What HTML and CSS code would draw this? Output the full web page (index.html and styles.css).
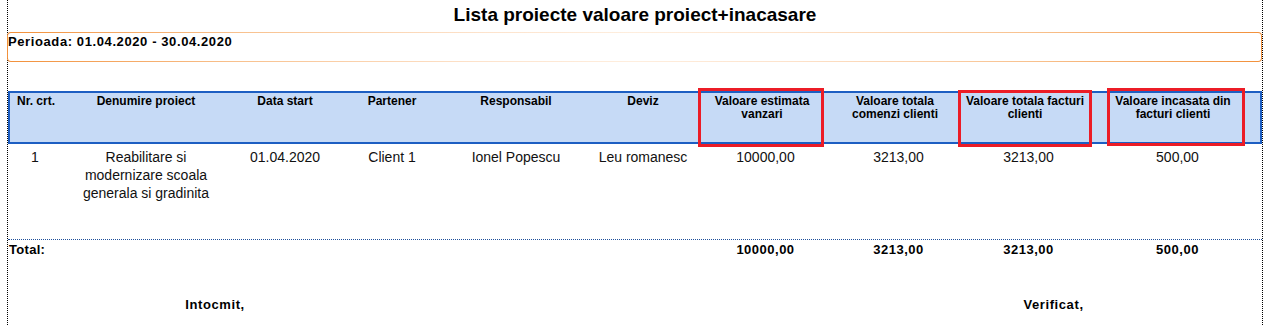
FILE: index.html
```html
<!DOCTYPE html>
<html lang="ro">
<head>
<meta charset="utf-8">
<title>Lista proiecte valoare proiect+inacasare</title>
<link rel="stylesheet" href="styles.css">
</head>
<body>
<div class="page">
  <h1 class="title">Lista proiecte valoare proiect+inacasare</h1>
  <div class="period"><div class="period-inner">Perioada: 01.04.2020 - 30.04.2020</div></div>

  <div class="report">
    <div class="row head">
      <div class="cell">Nr. crt.</div>
      <div class="cell">Denumire proiect</div>
      <div class="cell">Data start</div>
      <div class="cell">Partener</div>
      <div class="cell">Responsabil</div>
      <div class="cell">Deviz</div>
      <div class="cell">Valoare estimata<br>vanzari</div>
      <div class="cell">Valoare totala<br>comenzi clienti</div>
      <div class="cell">Valoare totala facturi<br>clienti</div>
      <div class="cell">Valoare incasata din<br>facturi clienti</div>
    </div>
    <div class="row data">
      <div class="cell">1</div>
      <div class="cell">Reabilitare si<br>modernizare scoala<br>generala si gradinita</div>
      <div class="cell">01.04.2020</div>
      <div class="cell">Client 1</div>
      <div class="cell">Ionel Popescu</div>
      <div class="cell">Leu romanesc</div>
      <div class="cell num">10000,00</div>
      <div class="cell num">3213,00</div>
      <div class="cell num">3213,00</div>
      <div class="cell num">500,00</div>
    </div>
    <div class="row total">
      <div class="cell label">Total:</div>
      <div class="cell"></div>
      <div class="cell"></div>
      <div class="cell"></div>
      <div class="cell"></div>
      <div class="cell"></div>
      <div class="cell num">10000,00</div>
      <div class="cell num">3213,00</div>
      <div class="cell num">3213,00</div>
      <div class="cell num">500,00</div>
    </div>
  </div>

  <div class="signatures">
    <div class="sign">Intocmit,</div>
    <div class="sign"></div>
    <div class="sign">Verificat,</div>
  </div>

  <span class="mark mark-1"></span>
  <span class="mark mark-2"></span>
  <span class="mark mark-3"></span>
</div>
</body>
</html>
```
FILE: styles.css
```css
html, body {
  margin: 0;
  padding: 0;
  background: #ffffff;
}

body {
  font-family: "Liberation Sans", Arial, sans-serif;
  color: #000;
}

.page {
  position: relative;
  box-sizing: border-box;
  margin-left: 7px;
  width: 1256px;
  min-height: 325px;
  border-left: 1px dotted #000;
  border-right: 1px dotted #000;
}

.title {
  margin: 0;
  padding-top: 4px;
  height: 22px;
  line-height: 22px;
  font-size: 19px;
  font-weight: bold;
  text-align: center;
}

.period {
  margin: 6px 0 0 -1px;
  width: 1255px;
  height: 30px;
  box-sizing: border-box;
  padding: 1px;
  border-radius: 4px;
  background: linear-gradient(to right, #f2903a 0%, #f8c08c 18%, #fde3cc 38%, #feeede 50%, #fde3cc 62%, #f8c08c 82%, #f2903a 100%);
}

.period-inner {
  height: 28px;
  box-sizing: border-box;
  background: #fff;
  border-radius: 3px;
  padding-top: 1px;
  font-size: 13px;
  line-height: 16px;
  font-weight: bold;
  letter-spacing: 0.6px;
}

.report {
  margin-top: 29px;
}

.row {
  display: grid;
  grid-template-columns: 54px 168px 110px 104px 144px 110px 128px 138px 122px 1fr;
}

.cell {
  text-align: center;
  white-space: nowrap;
}

.head {
  grid-template-columns: 52px 168px 110px 104px 144px 110px 128px 138px 122px 1fr;
  height: 53px;
  box-sizing: border-box;
  border: 2px solid #1d5ec2;
  background: #c6daf6;
  font-size: 12px;
  line-height: 13px;
  font-weight: bold;
  padding-top: 2px;
}

.data {
  height: 96px;
  box-sizing: border-box;
  padding-top: 4px;
  border-bottom: 1px dotted #1f4f9a;
  font-size: 14px;
  line-height: 18px;
  color: #111;
}

.data .num,
.total .num {
  padding-left: 7px;
}

.total {
  height: 20px;
  box-sizing: border-box;
  padding-top: 2px;
  font-size: 13px;
  line-height: 16px;
  font-weight: bold;
  letter-spacing: 0.5px;
}

.total .label {
  text-align: left;
  padding-left: 1px;
  letter-spacing: 0.3px;
}

.signatures {
  display: grid;
  grid-template-columns: 414px 423px 1fr;
  margin-top: 37px;
  font-size: 13px;
  line-height: 16px;
  font-weight: bold;
  letter-spacing: 0.6px;
}

.sign {
  text-align: center;
}

.mark {
  position: absolute;
  box-sizing: border-box;
  border: 3px solid #ec1c26;
}

.mark-1 {
  left: 690px;
  top: 88px;
  width: 126px;
  height: 59px;
}

.mark-2 {
  left: 950px;
  top: 90px;
  width: 134px;
  height: 57px;
}

.mark-3 {
  left: 1099px;
  top: 88px;
  width: 138px;
  height: 58px;
}
```
